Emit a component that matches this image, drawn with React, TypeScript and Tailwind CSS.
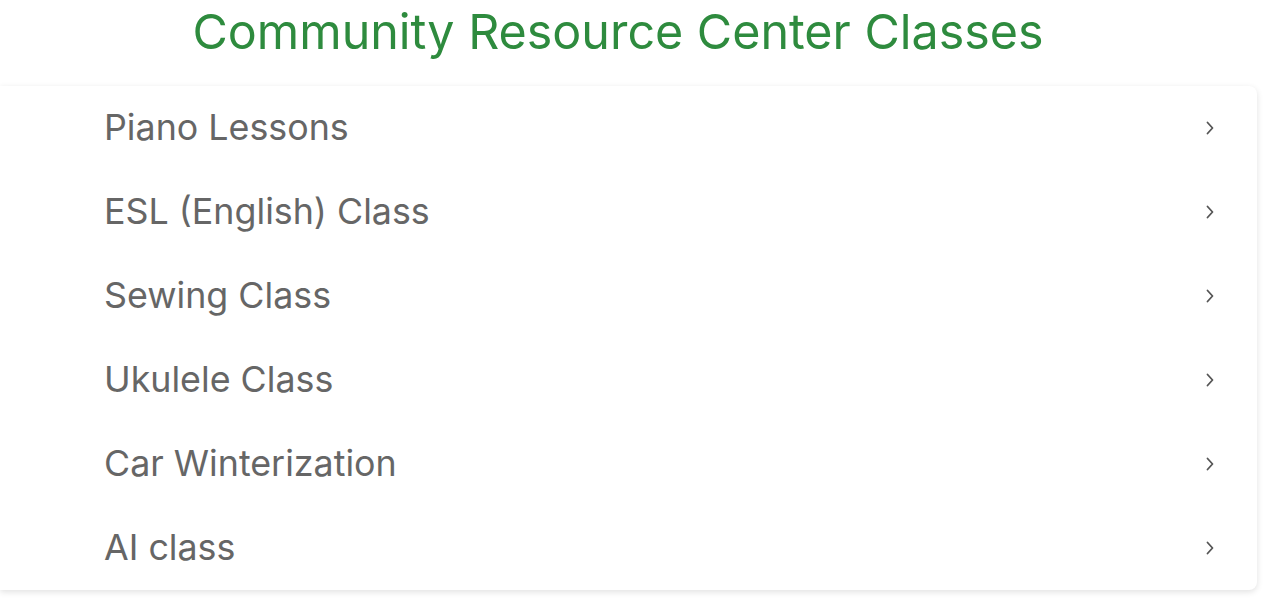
import React from "react";

const clases: string[] = [
    "Piano Lessons",
    "ESL (English) Class",
    "Sewing Class",
    "Ukulele Class",
    "Car Winterization",
    "AI class",
];

const Chevron: React.FC = () => (
    <svg width="8" height="14" viewBox="0 0 8 14" fill="none" className="text-[#555]">
        <path d="M1.5 1.5 L6.5 7 L1.5 12.5" stroke="currentColor" strokeWidth="1.8" strokeLinecap="round" strokeLinejoin="round" />
    </svg>
);

const App: React.FC = () => {
    return (
        <div className="min-h-screen bg-white font-['Inter',sans-serif]">
            <h1 className="pt-[3px] pr-[39px] text-center text-[48.4px] leading-[58px] font-normal text-[#2e8b3e]">
                Community Resource Center Classes
            </h1>
            <div className="mt-[25px] mr-[18px] rounded-r-lg bg-white shadow-[0_2px_6px_rgba(0,0,0,0.12)]">
                <ul>
                    {clases.map((nombre, index) => (
                        <li key={index} className="flex h-[84px] items-center justify-between pl-[104px] pr-[43px]">
                            <span className="text-[35.8px] leading-none text-[#666]">{nombre}</span>
                            <Chevron />
                        </li>
                    ))}
                </ul>
            </div>
        </div>
    );
};

export default App;
